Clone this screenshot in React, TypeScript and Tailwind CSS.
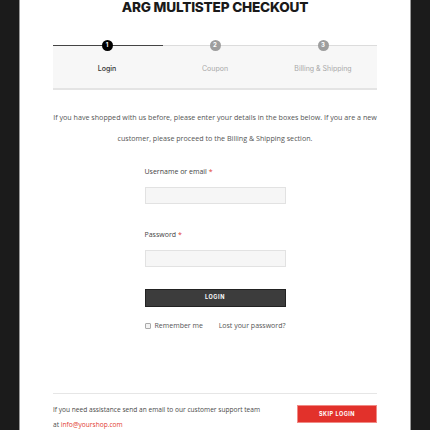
import React from "react";

const sans = { fontFamily: '"Open Sans", "Liberation Sans", sans-serif' };
const geo = { fontFamily: 'Inter, "Liberation Sans", sans-serif' };

function Step({ n, label, active }: { n: number; label: string; active?: boolean }) {
  return (
    <div className="relative flex flex-col items-center">
      <div
        className={`absolute -top-[6px] w-[11px] h-[11px] rounded-full flex items-center justify-center text-white text-[6px] font-bold leading-none ${active ? "bg-black" : "bg-[#9e9e9e]"}`}
        style={geo}
      >
        {n}
      </div>
      <div
        className={`mt-[18px] text-[7px] ${active ? "text-[#333] font-medium" : "text-[#a8a8a8]"}`}
        style={geo}
      >
        {label}
      </div>
    </div>
  );
}

export default function App() {
  return (
    <div className="w-[430px] h-[430px] bg-[#1b1b1b] flex justify-center overflow-hidden">
      <div className="w-[392px] h-[430px] bg-white border-x border-[#9a9a9a] px-[33px] flex flex-col">
        <h1
          className="text-center text-[13.6px] font-extrabold text-[#1a1a1a] leading-none mt-[1px] tracking-[-0.2px]"
          style={geo}
        >
          ARG MULTISTEP CHECKOUT
        </h1>
        {/* steps */}
        <div className="mt-[30px] relative">
          <div className="h-[1px] bg-[#dcdcdc] relative">
            <div className="absolute left-0 top-0 h-[1px] w-[110px] bg-[#444]" />
          </div>
          <div className="bg-[#f7f7f7] h-[44px] border-b-2 border-[#e4e4e4] grid grid-cols-3">
            <Step n={1} label="Login" active />
            <Step n={2} label="Coupon" />
            <Step n={3} label="Billing & Shipping" />
          </div>
        </div>
        {/* paragraph */}
        <p className="-mx-[10px] mt-[17px] text-center whitespace-nowrap text-[7.15px] leading-[21px] text-[#555]" style={sans}>
          If you have shopped with us before, please enter your details in the boxes below. If you are a new
          <br />
          customer, please proceed to the Billing &amp; Shipping section.
        </p>
        {/* form */}
        <div className="w-[141px] self-center flex flex-col mt-[18px]" style={sans}>
          <label className="text-[7px] leading-[10px] text-[#444]">
            Username or email <span className="text-[#e23b2f]">*</span>
          </label>
          <div className="mt-[10px] h-[17px] bg-[#f6f6f6] border border-[#e2e2e2]" />
          <label className="mt-[26px] text-[7px] leading-[10px] text-[#444]">
            Password <span className="text-[#e23b2f]">*</span>
          </label>
          <div className="mt-[10px] h-[17px] bg-[#f6f6f6] border border-[#e2e2e2]" />
          <div
            className="mt-[22px] h-[18px] bg-[#3c3c3c] border border-[#222] flex items-center justify-center text-white text-[5.5px] font-bold tracking-[0.6px]"
            style={geo}
          >
            LOGIN
          </div>
          <div className="mt-[14px] flex items-center justify-between text-[7px] text-[#555]">
            <div className="flex items-center gap-[4px]">
              <span className="w-[6px] h-[6px] border border-[#aaa] bg-[#f3f3f3] rounded-[1px]" />
              <span>Remember me</span>
            </div>
            <span>Lost your password?</span>
          </div>
        </div>
        {/* footer */}
        <div className="mt-[62px] border-t border-[#e6e6e6] pt-[8px] flex items-start justify-between">
          <div className="text-[6.6px] leading-[15px] text-[#4a4a4a] whitespace-nowrap" style={sans}>
            If you need assistance send an email to our customer support team
            <br />
            at <span className="text-[#e23b2f]">info@yourshop.com</span>
          </div>
          <div
            className="mt-[3px] w-[80px] h-[18px] bg-[#e2312b] border border-[#f08a85] flex items-center justify-center text-white text-[5.5px] font-bold tracking-[0.5px]"
            style={geo}
          >
            SKIP LOGIN
          </div>
        </div>
      </div>
    </div>
  );
}
